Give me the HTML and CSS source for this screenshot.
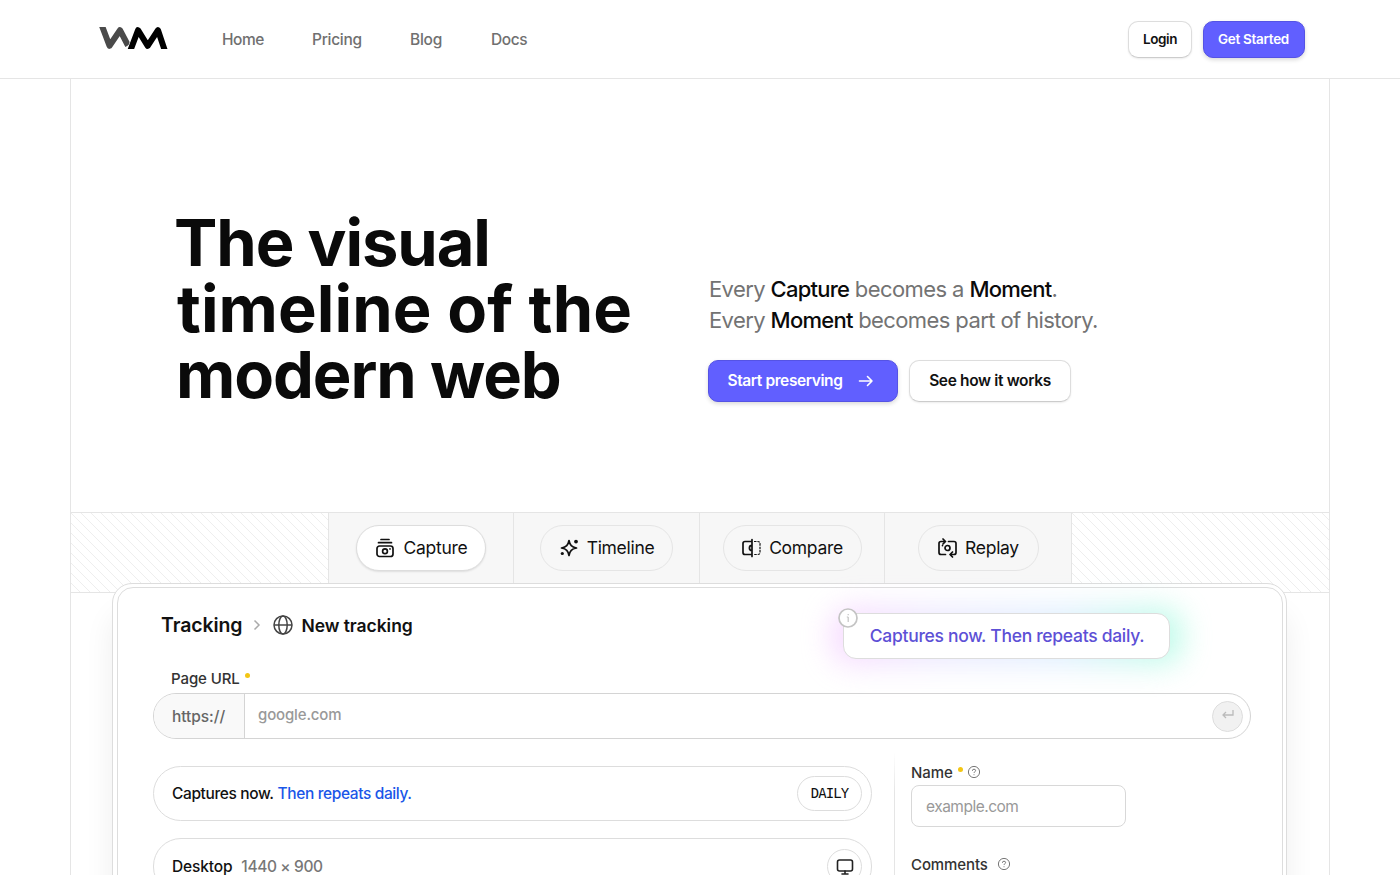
FILE: index.html
```
<!DOCTYPE html>
<html lang="en">
<head>
    <meta charset="UTF-8">
    <meta name="viewport" content="width=device-width, initial-scale=1.0">
    <title>The visual timeline of the modern web</title>
    <link rel="stylesheet" href="styles.css">
</head>
<body>

    <header class="header">
        <svg class="logo" width="70" height="22" viewBox="0 0 70 22" fill="none" stroke-width="6" stroke-linejoin="round">
            <path d="M3.300 -3 L11.500 18.800 L22 3.200 L30 18.500" stroke="#4a4a4a"/>
            <path d="M31.800 25 L40 3.200 L49.700 18.800 L60 3.200 L67.300 25" stroke="#fff" stroke-width="7.200"/>
            <path d="M31.800 25 L40 3.200 L49.700 18.800 L60 3.200 L67.300 25" stroke="#000"/>
        </svg>
        <nav class="nav">
            <a class="nav-home">Home</a>
            <a class="nav-pricing">Pricing</a>
            <a class="nav-blog">Blog</a>
            <a class="nav-docs">Docs</a>
        </nav>
        <div class="header-actions">
            <button class="btn btn-login">Login</button>
            <button class="btn btn-primary btn-start">Get Started</button>
        </div>
    </header>

    <main class="page">
        <section class="hero">
            <h1>
                <span class="line-1">The visual</span>
                <span class="line-2">timeline of the</span>
                <span class="line-3">modern web</span>
            </h1>
            <div class="hero-side">
                <p class="lead">
                    <span class="lead-1">Every <b>Capture</b> becomes a <b>Moment</b>.</span><br>
                    <span class="lead-2">Every <b>Moment</b> becomes part of history.</span>
                </p>
                <div class="hero-buttons">
                    <button class="btn btn-primary btn-preserve">
                        <span>Start preserving</span>
                        <svg width="16" height="12" viewBox="0 0 16 12" fill="none" stroke="currentColor" stroke-width="1.6" stroke-linecap="round" stroke-linejoin="round"><path d="M1.5 6h12.500M9.500 1.500L14 6l-4.500 4.500"/></svg>
                    </button>
                    <button class="btn btn-how">See how it works</button>
                </div>
            </div>
        </section>

        <section class="tabs">
            <div class="hatch"></div>
            <div class="tab">
                <button class="pill pill-active pill-capture">
                    <svg class="icon" viewBox="0 0 20 20"><path d="M6 1.500h8M3.500 4.700h13"/><rect x="2" y="8" width="16" height="10.500" rx="2.500"/><circle cx="10" cy="13.200" r="2.400"/><path d="M15 10.800v.1"/></svg>
                    <span>Capture</span>
                </button>
            </div>
            <div class="tab">
                <button class="pill pill-timeline">
                    <svg class="icon" viewBox="0 0 20 20"><path d="M10 2.500c1 4.900 2.500 6.500 7.500 7.500-5 1-6.500 2.600-7.500 7.500-1-4.900-2.500-6.500-7.500-7.500 5-1 6.500-2.600 7.500-7.500z"/><circle class="dot" cx="17" cy="3.600" r="1.900"/><circle class="dot" cx="3.300" cy="15.500" r="1.600"/></svg>
                    <span>Timeline</span>
                </button>
            </div>
            <div class="tab">
                <button class="pill pill-compare">
                    <svg class="icon" viewBox="0 0 20 20"><path d="M11 1.500v17M11 3.500H4Q2 3.500 2 5.500v9q0 2 2 2h7M11 7.400a2.600 2.600 0 0 0 0 5.200"/><path class="thin" d="M13 3.500h3.500q2.500 0 2.500 2v9q0 2-2.500 2H13" stroke-dasharray="2.500 .9"/></svg>
                    <span>Compare</span>
                </button>
            </div>
            <div class="tab">
                <button class="pill pill-replay">
                    <svg class="icon" viewBox="0 0 20 20"><path d="M7.500 3.500H4Q2 3.500 2 5.500v9q0 2 2 2h4.500M6 1l2.500 2.500L6 6M11.500 3.500H17q2 0 2 2v9q0 2-2 2h-3.500M15.500 14L13 16.500l2.500 2.500M5.500 7.500v.1"/><circle cx="10.500" cy="10" r="2.500"/></svg>
                    <span>Replay</span>
                </button>
            </div>
            <div class="hatch"></div>
        </section>

        <section class="frame">
            <div class="panel">
                <div class="panel-head">
                    <div class="crumbs">
                        <span class="crumb-root">Tracking</span>
                        <svg class="chevron" width="8" height="12" viewBox="0 0 8 12" fill="none" stroke="#aaa" stroke-width="1.500"><path d="M1.500 1.500L6 6l-4.500 4.500"/></svg>
                        <svg class="globe" width="20" height="20" viewBox="0 0 20 20" fill="none" stroke="#444" stroke-width="1.500"><circle cx="10" cy="10" r="9"/><ellipse cx="10" cy="10" rx="4.200" ry="9"/><path d="M1 10h18"/></svg>
                        <span class="crumb-page">New tracking</span>
                    </div>
                    <div class="notice">
                        <span class="notice-text">Captures now. Then repeats daily.</span>
                        <svg class="info" width="20" height="20" viewBox="0 0 20 20" fill="none" stroke="#c4c4c4" stroke-width="1.700"><circle cx="10" cy="10" r="9" fill="#fff"/><path d="M10.200 9v5M10.200 6v1.300M8.800 9h1.400" stroke-width="1.200"/></svg>
                    </div>
                </div>

                <label class="label url-label"><span>Page URL</span><i></i></label>
                <div class="url-box">
                    <span class="scheme"><span>https://</span></span>
                    <span class="url-value">google.com</span>
                    <span class="enter"><svg width="14" height="12" viewBox="0 0 14 12" fill="none" stroke="#bbb" stroke-width="1.300"><path d="M12 1v5H2M5 3L2 6l3 3"/></svg></span>
                </div>

                <div class="columns">
                    <div class="options">
                        <div class="option option-daily">
                            <span class="opt-now">Captures now.</span>
                            <span class="opt-then">Then repeats daily.</span>
                            <span class="daily">DAILY</span>
                        </div>
                        <div class="option option-desktop">
                            <span class="opt-device">Desktop</span>
                            <span class="opt-size">1440 × 900</span>
                            <span class="monitor"><svg width="18" height="18" viewBox="0 0 18 18" fill="none" stroke="#222" stroke-width="1.600" stroke-linecap="round"><rect x="1.500" y="2" width="15" height="11" rx="2"/><path d="M9 13v3M6 16h6"/></svg></span>
                        </div>
                    </div>
                    <div class="details">
                        <label class="label"><span class="t-name">Name</span><i></i><svg class="help" width="14" height="14" viewBox="0 0 14 14"><circle cx="7" cy="7" r="5.600"/><path d="M5.400 5.800q0-1.600 1.600-1.600t1.600 1.400q0 .8-.8 1.200T7 8M7 9.300v.9"/></svg></label>
                        <div class="name-input"><span>example.com</span></div>
                        <label class="label comments"><span class="t-comments">Comments</span><svg class="help" width="14" height="14" viewBox="0 0 14 14"><circle cx="7" cy="7" r="5.600"/><path d="M5.400 5.800q0-1.600 1.600-1.600t1.600 1.400q0 .8-.8 1.200T7 8M7 9.300v.9"/></svg></label>
                    </div>
                </div>
            </div>
        </section>
    </main>

</body>
</html>
```
FILE: styles.css
```
* {
    box-sizing: border-box;
}

body {
    margin: 0;
    height: 875px;
    overflow: hidden;
    font-family: Inter, "Liberation Sans", sans-serif;
    background-color: #fff;
    color: #111;
    white-space: nowrap;
}

/* header */
.header {
    height: 79px;
    display: flex;
    align-items: center;
    padding: 0 95px 0 98px;
    border-bottom: 1px solid #e5e5e5;
}

.logo {
    flex: none;
    margin-bottom: 2px;
}

.nav {
    display: flex;
    margin-left: 54px;
    padding-top: 1px;
    font-size: 15.5px;
    font-weight: 500;
    color: #707070;
}

.nav a {
    flex: none;
}

.nav-home { width: 90px; letter-spacing: -0.5px; }
.nav-pricing { width: 98px; letter-spacing: -0.3px; }
.nav-blog { width: 81px; letter-spacing: -0.25px; }
.nav-docs { letter-spacing: -0.4px; }

.header-actions {
    display: flex;
    gap: 11px;
    margin-left: auto;
    padding-top: 1px;
}

.btn {
    display: flex;
    align-items: center;
    justify-content: center;
    flex: none;
    padding: 0;
    font-family: inherit;
    font-weight: 600;
    color: #111;
    background-color: #fff;
    border: 1px solid #ddd;
    border-bottom-color: #ccc;
    border-radius: 10px;
    box-shadow: 0 1px 2px rgba(0, 0, 0, 0.08);
    white-space: nowrap;
}

.btn-primary {
    color: #fff;
    background-color: #615fff;
    border-color: #5553e4;
    box-shadow: 0 2px 4px rgba(0, 0, 0, 0.15);
}

.btn-login {
    width: 64px;
    height: 37px;
    padding-bottom: 1px;
    font-size: 13.5px;
    letter-spacing: -0.4px;
}

.btn-start {
    width: 102px;
    height: 37px;
    padding: 0 1px 1px 0;
    font-size: 13.5px;
    letter-spacing: -0.3px;
}

/* hero */
.page {
    width: 1260px;
    height: 796px;
    margin: 0 auto;
    border-left: 1px solid #e5e5e5;
    border-right: 1px solid #e5e5e5;
}

.hero {
    display: flex;
    height: 433px;
}

h1 {
    width: 532px;
    margin: 131px 0 0 105px;
    font-size: 65px;
    line-height: 66px;
    font-weight: 700;
    color: #0a0a0a;
}

h1 span {
    display: block;
}

.line-1 { margin-left: -2px; letter-spacing: -1.1px; }
.line-2 { margin-left: 1px; letter-spacing: 0.1px; }
.line-3 { letter-spacing: -1.1px; }

.lead {
    margin: 195px 0 24px 1px;
    font-size: 22px;
    line-height: 31px;
    color: #737373;
}

.lead b {
    font-weight: 500;
    letter-spacing: -0.75px;
    color: #0a0a0a;
}

.lead-1 { letter-spacing: -0.6px; }
.lead-2 { letter-spacing: -0.6px; }

.hero-buttons {
    display: flex;
    gap: 11px;
}

.btn-preserve {
    width: 190px;
    height: 42px;
    gap: 15px;
    padding: 0 5px 1px 0;
    font-size: 15.5px;
    letter-spacing: -0.4px;
}

.btn-how {
    width: 162px;
    height: 42px;
    padding-bottom: 1px;
    font-size: 15.5px;
    letter-spacing: -0.35px;
}

/* feature tabs */
.tabs {
    display: grid;
    grid-template-columns: 257px 185px 186px 185px 188px 257px;
    height: 81px;
    border-top: 1px solid #e5e5e5;
    border-bottom: 1px solid #e5e5e5;
}

.hatch {
    background: repeating-linear-gradient(45deg, #fff 0, #fff 6.1px, #eee 6.1px, #eee 7.07px);
}

.tab {
    display: flex;
    justify-content: center;
    padding-top: 12px;
    background-color: #f7f7f7;
    border-left: 1px solid #e5e5e5;
}

.tab:nth-child(5) {
    border-right: 1px solid #e5e5e5;
}

.pill {
    display: flex;
    align-items: center;
    justify-content: center;
    gap: 8px;
    height: 46px;
    padding: 0 0 1px;
    font-family: inherit;
    font-size: 17.5px;
    color: #111;
    background: transparent;
    border: 1px solid #e5e5e5;
    border-radius: 23px;
    letter-spacing: -0.3px;
}

.pill-active {
    background: #fff;
    border-color: #ddd;
    box-shadow: 0 1px 2px rgba(0, 0, 0, 0.1);
}

.pill-capture { width: 130px; gap: 9px; }
.pill-timeline { width: 133px; }
.pill-compare { width: 139px; }
.pill-replay { width: 121px; }

.icon {
    width: 20px;
    height: 20px;
    flex: none;
    fill: none;
    stroke: #111;
    stroke-width: 1.7;
    stroke-linecap: round;
    stroke-linejoin: round;
}

.icon .dot {
    fill: #111;
    stroke: none;
}

.icon .thin {
    stroke-width: 1.2;
    stroke-linecap: butt;
}

/* app preview */
.frame {
    position: relative;
    width: 1175px;
    height: 320px;
    margin: -10px 0 0 41px;
    padding: 3px 3px 0 4px;
    background-color: #fff;
    border: 1px solid #ddd;
    border-radius: 20px 20px 0 0;
    box-shadow: 0 30px 30px rgba(0, 0, 0, 0.07);
}

.panel {
    height: 316px;
    padding: 0 31px 0 35px;
    border: 1px solid #ddd;
    border-radius: 16px 16px 0 0;
}

.panel-head {
    display: flex;
    height: 80px;
    isolation: isolate;
}

.crumbs {
    display: flex;
    align-items: center;
    height: 74px;
    padding-left: 8px;
    font-weight: 600;
}

.crumb-root {
    font-size: 19.5px;
    letter-spacing: -0.1px;
}

.chevron { margin: 0 12px 0 11px; }
.globe { margin-right: 8px; }

.crumb-page {
    font-size: 17.5px;
    letter-spacing: -0.05px;
}

.notice {
    position: relative;
    display: flex;
    align-items: center;
    justify-content: center;
    width: 327px;
    height: 46px;
    margin: 25px 81px 0 auto;
    font-size: 17.5px;
    font-weight: 500;
    color: #5d50d6;
    letter-spacing: -0.3px;
    background-color: #fff;
    border: 1px solid #ddd;
    border-radius: 13px;
}

/* soft glow behind the notice */
.notice::before {
    content: "";
    position: absolute;
    inset: -6px -12px;
    z-index: -1;
    border-radius: 20px;
    background: linear-gradient(90deg, #f3b8ff, #dcd6ff 30%, #c4e0ff 65%, #7dfbd0);
    filter: blur(15px);
    opacity: 0.55;
}

.notice-text {
    margin: 0 0 1px 1px;
}

.info {
    position: absolute;
    top: -6px;
    left: -6px;
}

.label {
    display: flex;
    align-items: center;
    height: 20px;
    font-size: 15px;
    font-weight: 500;
    color: #333;
    letter-spacing: -0.1px;
}

.label i {
    width: 5px;
    height: 5px;
    margin: 0 0 5px 5px;
    border-radius: 50%;
    background-color: #f3c614;
}

.url-label {
    padding-left: 18px;
}

.url-box {
    display: flex;
    align-items: center;
    height: 46px;
    margin-top: 5px;
    padding-right: 7px;
    border: 1px solid #d4d4d4;
    border-radius: 24px;
    font-size: 15.5px;
    overflow: hidden;
}

.scheme {
    display: flex;
    align-items: center;
    width: 91px;
    height: 44px;
    padding-left: 18px;
    color: #666;
    background-color: #f9f9f9;
    border-right: 1px solid #d4d4d4;
    font-weight: 500;
    letter-spacing: -0.05px;
}

.url-value {
    margin: 0 0 4px 13px;
    font-size: 15px;
    font-weight: 500;
    letter-spacing: -0.15px;
    color: #999;
}

.enter {
    display: flex;
    align-items: center;
    justify-content: center;
    width: 31px;
    height: 31px;
    margin-left: auto;
    padding-bottom: 2px;
    border: 1px solid #ddd;
    border-radius: 50%;
    background-color: #f1f1f1;
}

.columns {
    display: flex;
}

.options {
    width: 719px;
    margin-top: 27px;
}

.option {
    display: flex;
    align-items: center;
    height: 55px;
    margin-bottom: 17px;
    padding: 0 9px 0 18px;
    border: 1px solid #ddd;
    border-radius: 28px;
    font-size: 15.5px;
    font-weight: 500;
    letter-spacing: -0.38px;
}

.option-desktop {
    height: 57px;
}

.opt-then {
    margin-left: 4px;
    color: #1a56e8;
}

.opt-device {
    letter-spacing: -0.15px;
}

.opt-size {
    margin-left: 9px;
    color: #777;
}

.daily {
    width: 65px;
    margin-left: auto;
    border: 1px solid #ddd;
    border-radius: 18px;
    font-family: "DejaVu Sans Mono", monospace;
    font-size: 14px;
    letter-spacing: -0.9px;
    line-height: 33px;
    text-align: center;
}

.monitor {
    display: flex;
    align-items: center;
    justify-content: center;
    width: 35px;
    height: 35px;
    margin-left: auto;
    border: 1px solid #ddd;
    border-radius: 50%;
}

.details {
    margin: 14px 0 0 22px;
    padding: 9px 0 0 16px;
    border-left: 1px solid;
    border-image: linear-gradient(#fff, #e5e5e5 40px) 1;
}

.name-input {
    display: flex;
    align-items: center;
    width: 215px;
    height: 42px;
    margin-top: 3px;
    padding-left: 14px;
    border: 1px solid #d8d8d8;
    border-radius: 8px;
    font-size: 15.5px;
    color: #999;
    letter-spacing: -0.5px;
}

.comments {
    margin-top: 27px;
}

.help {
    margin-left: 4px;
    fill: none;
    stroke: #777;
    stroke-width: 1;
}

.comments .help {
    margin-left: 9px;
}
```
